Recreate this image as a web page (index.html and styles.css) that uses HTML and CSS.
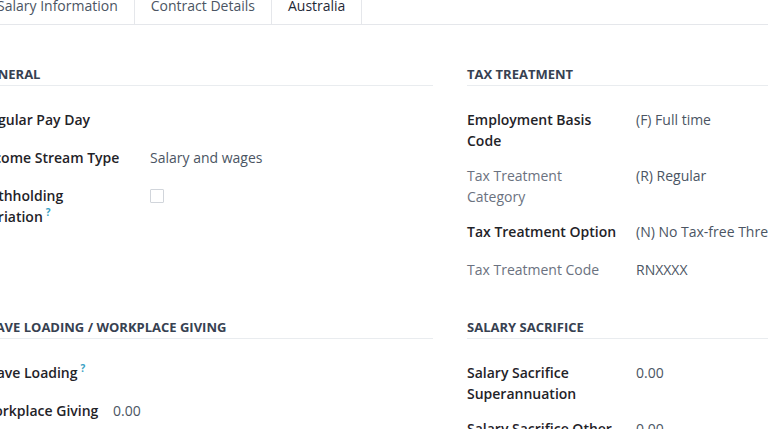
FILE: index.html
```html
<!DOCTYPE html>
<html lang="en">
<head>
<meta charset="utf-8">
<title>Employee – Australia</title>
<link rel="stylesheet" href="styles.css">
</head>
<body>
<div class="sheet">
  <ul class="tabs">
    <li class="tab">Salary Information</li>
    <li class="tab">Contract Details</li>
    <li class="tab active">Australia</li>
  </ul>

  <div class="groups">
    <section class="group">
      <h3 class="group-title">General</h3>
      <div class="fields">
        <div class="label">Regular Pay Day</div>
        <div class="value"></div>

        <div class="label">Income Stream Type</div>
        <div class="value">Salary and wages</div>

        <div class="label">Withholding Variation<sup class="help">?</sup></div>
        <div class="value"><span class="checkbox"></span></div>
      </div>
    </section>

    <section class="group">
      <h3 class="group-title">Tax Treatment</h3>
      <div class="fields">
        <div class="label">Employment Basis Code</div>
        <div class="value">(F) Full time</div>

        <div class="label muted">Tax Treatment Category</div>
        <div class="value">(R) Regular</div>

        <div class="label">Tax Treatment Option</div>
        <div class="value nowrap">(N) No Tax-free Threshold nominated</div>

        <div class="label muted">Tax Treatment Code</div>
        <div class="value">RNXXXX</div>
      </div>
    </section>

    <section class="group">
      <h3 class="group-title">Leave Loading / Workplace Giving</h3>
      <div class="fields narrow">
        <div class="label">Leave Loading<sup class="help">?</sup></div>
        <div class="value"></div>

        <div class="label">Workplace Giving</div>
        <div class="value">0.00</div>
      </div>
    </section>

    <section class="group">
      <h3 class="group-title">Salary Sacrifice</h3>
      <div class="fields">
        <div class="label">Salary Sacrifice Superannuation</div>
        <div class="value">0.00</div>

        <div class="label">Salary Sacrifice Other</div>
        <div class="value">0.00</div>
      </div>
    </section>
  </div>
</div>
</body>
</html>
```

FILE: styles.css
```css
html, body {
  margin: 0;
  padding: 0;
  overflow: hidden;
  background: #ffffff;
}

body {
  font-family: "Open Sans", "Noto Sans", sans-serif;
  font-size: 14px;
  line-height: 21px;
  color: #212529;
}

/* The form sheet is scrolled slightly: its left edge and the top of the tabs sit off-screen */
.sheet {
  margin: -13px 0 0 -19px;
  width: 938px;
}

/* Notebook tabs */
.tabs {
  display: flex;
  list-style: none;
  margin: 0 -200px 0 0;
  padding: 0;
  border-bottom: 1px solid #e5e7eb;
}

.tab {
  padding: 8px 16px;
  color: #4b5563;
  border-right: 1px solid #e5e7eb;
  white-space: nowrap;
}

.tab.active {
  color: #1f2937;
}

/* Two-column field groups */
.groups {
  display: grid;
  grid-template-columns: 452px 452px;
  column-gap: 34px;
  row-gap: 20px;
  padding-top: 39px;
}

.group-title {
  margin: 0 0 23px;
  font-size: 13px;
  line-height: 21px;
  font-weight: 700;
  text-transform: uppercase;
  color: #374151;
  border-bottom: 1px solid #e9ecef;
  white-space: nowrap;
}

.fields {
  display: grid;
  grid-template-columns: 169px 1fr;
  align-items: start;
}

.fields.narrow {
  grid-template-columns: 132px 1fr;
}

.fields.narrow .label {
  white-space: nowrap;
  padding-right: 0;
}

.label,
.value {
  min-height: 24px;
  padding-bottom: 14px;
}

.label {
  padding-right: 18px;
  font-weight: 600;
  color: #1f2328;
}

.label.muted {
  font-weight: 400;
  color: #6b7280;
}

.value {
  color: #4b5563;
}

.value.nowrap {
  white-space: nowrap;
}

.help {
  margin-left: 3px;
  font-size: 10px;
  line-height: 0;
  font-weight: 700;
  color: #3a9fc4;
}

.checkbox {
  display: block;
  width: 12px;
  height: 12px;
  margin-top: 4px;
  border: 1px solid #d1d5db;
  border-radius: 1px;
  background: #fff;
}
```
